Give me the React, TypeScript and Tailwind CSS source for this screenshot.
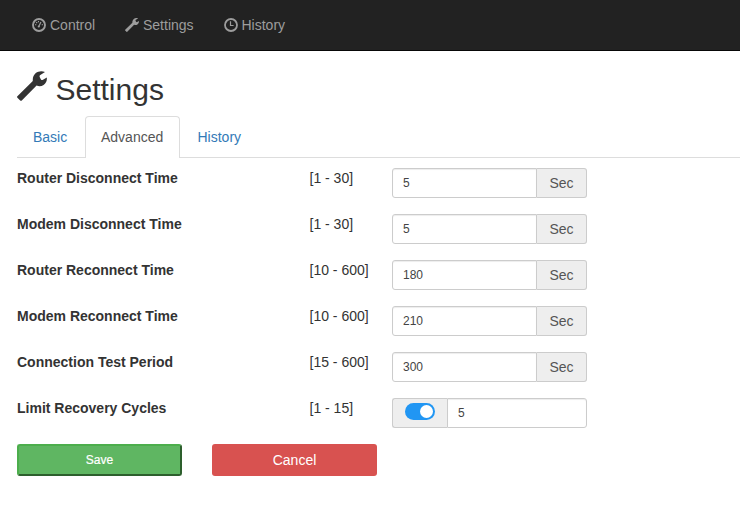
import React from "react";

const WRENCH =
  "M0.4 25.3 L15.8 10 C15.5 6.8 16.6 4 18.8 2.1 C21.2 .1 24.6 -.5 28 .9 L23.3 4 C22.5 4.6 22.4 5.4 22.8 6.2 L23.8 8.2 C24.3 9.1 25.1 9.3 26 8.8 L29.8 6.6 C30.2 9.6 28.9 12.4 26.6 13.9 C24.5 15.3 22 15.6 19.6 14.5 L4.8 29.4 C4.3 29.9 3.7 29.9 3.2 29.4 L0.4 26.7 C-.1 26.2 -.1 25.8 .4 25.3 Z";

function Wrench({ className }: { className: string }) {
  return (
    <svg viewBox="0 0 30 30" className={className} fill="currentColor">
      <path d={WRENCH} />
    </svg>
  );
}

function Gauge() {
  return (
    <svg viewBox="0 0 14 14" className="size-3.5 shrink-0" fill="none" stroke="currentColor">
      <circle cx="7" cy="7" r="6" strokeWidth="1.9" />
      <path d="M6.8 8.6 L8.9 4" strokeWidth="1.2" />
      <circle cx="6.8" cy="8.5" r="1.1" fill="currentColor" stroke="none" />
      <path d="M3 6.8h1.3M4.2 4.2l1 1M6.5 3v1.3M9.7 6.8H11" strokeWidth="1.1" />
    </svg>
  );
}

function Clock() {
  return (
    <svg viewBox="0 0 14 14" className="size-3.5 shrink-0" fill="none" stroke="currentColor">
      <circle cx="7" cy="7" r="6" strokeWidth="1.8" />
      <path d="M6.5 3.2V7.5H9.6" strokeWidth="1.2" />
    </svg>
  );
}

const rows = [
  { label: "Router Disconnect Time", range: "[1 - 30]", value: "5" },
  { label: "Modem Disconnect Time", range: "[1 - 30]", value: "5" },
  { label: "Router Reconnect Time", range: "[10 - 600]", value: "180" },
  { label: "Modem Reconnect Time", range: "[10 - 600]", value: "210" },
  { label: "Connection Test Period", range: "[15 - 600]", value: "300" },
  { label: "Limit Recovery Cycles", range: "[1 - 15]", value: "5", toggle: true },
];

const inputClass =
  "h-[30px] min-w-0 flex-1 border border-[#ccc] bg-white px-2.5 text-xs text-[#444] shadow-[inset_0_1px_1px_rgba(0,0,0,0.075)] outline-none";

export default function App() {
  return (
    <div className="h-[517px] w-[740px] overflow-hidden bg-white font-['Liberation_Sans',Arial,sans-serif] text-sm leading-5 text-[#333]">
      <nav className="flex h-[51px] gap-[30px] border-b border-[#080808] bg-[#222] pt-[15px] pl-8 text-[#9d9d9d]">
        <a className="flex h-5 w-[63px] items-center gap-1"><Gauge />Control</a>
        <a className="flex h-5 w-[68.5px] items-center gap-1"><Wrench className="size-3.5 shrink-0" />Settings</a>
        <a className="flex h-5 items-center gap-1"><Clock />History</a>
      </nav>
      <main className="pl-[17px]">
        <h1 className="mt-5 flex h-[33px] gap-[8.5px] text-[30px] leading-[37px]">
          <Wrench className="size-[30px]" />
          Settings
        </h1>
        <div className="mt-3 flex h-[42px] border-b border-[#ddd]">
          <a className="w-[68px] px-4 pt-[11px] text-[#337ab7]">Basic</a>
          <a className="h-[42px] w-[95px] rounded-t border border-b-0 border-[#ddd] bg-white px-[15px] pt-[10px] text-[#555]">Advanced</a>
          <a className="ml-0.5 px-[15.5px] pt-[11px] text-[#337ab7]">History</a>
        </div>
        <div className="mt-2.5 flex flex-col gap-4">
          {rows.map((r) => (
            <div key={r.label} className="flex h-[30px]">
              <div className="w-[292.5px] font-bold">{r.label}</div>
              <div className="w-[82.5px]">{r.range}</div>
              <div className="flex w-[195px]">
                {r.toggle ? (
                  <>
                    <div className="flex h-[30px] w-[55px] justify-center rounded-l-[3px] border border-r-0 border-[#ccc] bg-[#eee] pt-1">
                      <span className="flex h-[17px] w-[30px] items-center justify-end rounded-full bg-[#2196f3] pr-0.5">
                        <span className="size-[13px] rounded-full bg-white" />
                      </span>
                    </div>
                    <input className={`${inputClass} rounded-r-[3px]`} defaultValue={r.value} />
                  </>
                ) : (
                  <>
                    <input className={`${inputClass} rounded-l-[3px]`} defaultValue={r.value} />
                    <div className="h-[30px] w-[50px] rounded-r-[3px] border border-l-0 border-[#ccc] bg-[#eee] pt-1 text-center text-[#555]">Sec</div>
                  </>
                )}
              </div>
            </div>
          ))}
        </div>
        <div className="mt-4 flex gap-[30px]">
          <button className="h-8 w-[165px] rounded-[3px] border-2 border-t-[#4cae4c] border-r-[#2d5f2d] border-b-[#2d5f2d] border-l-[#4cae4c] bg-[#5fb662] text-xs text-white [-webkit-text-stroke:0.2px_white]">Save</button>
          <button className="h-8 w-[165px] rounded-[3px] bg-[#d85250] text-sm text-white">Cancel</button>
        </div>
      </main>
    </div>
  );
}
